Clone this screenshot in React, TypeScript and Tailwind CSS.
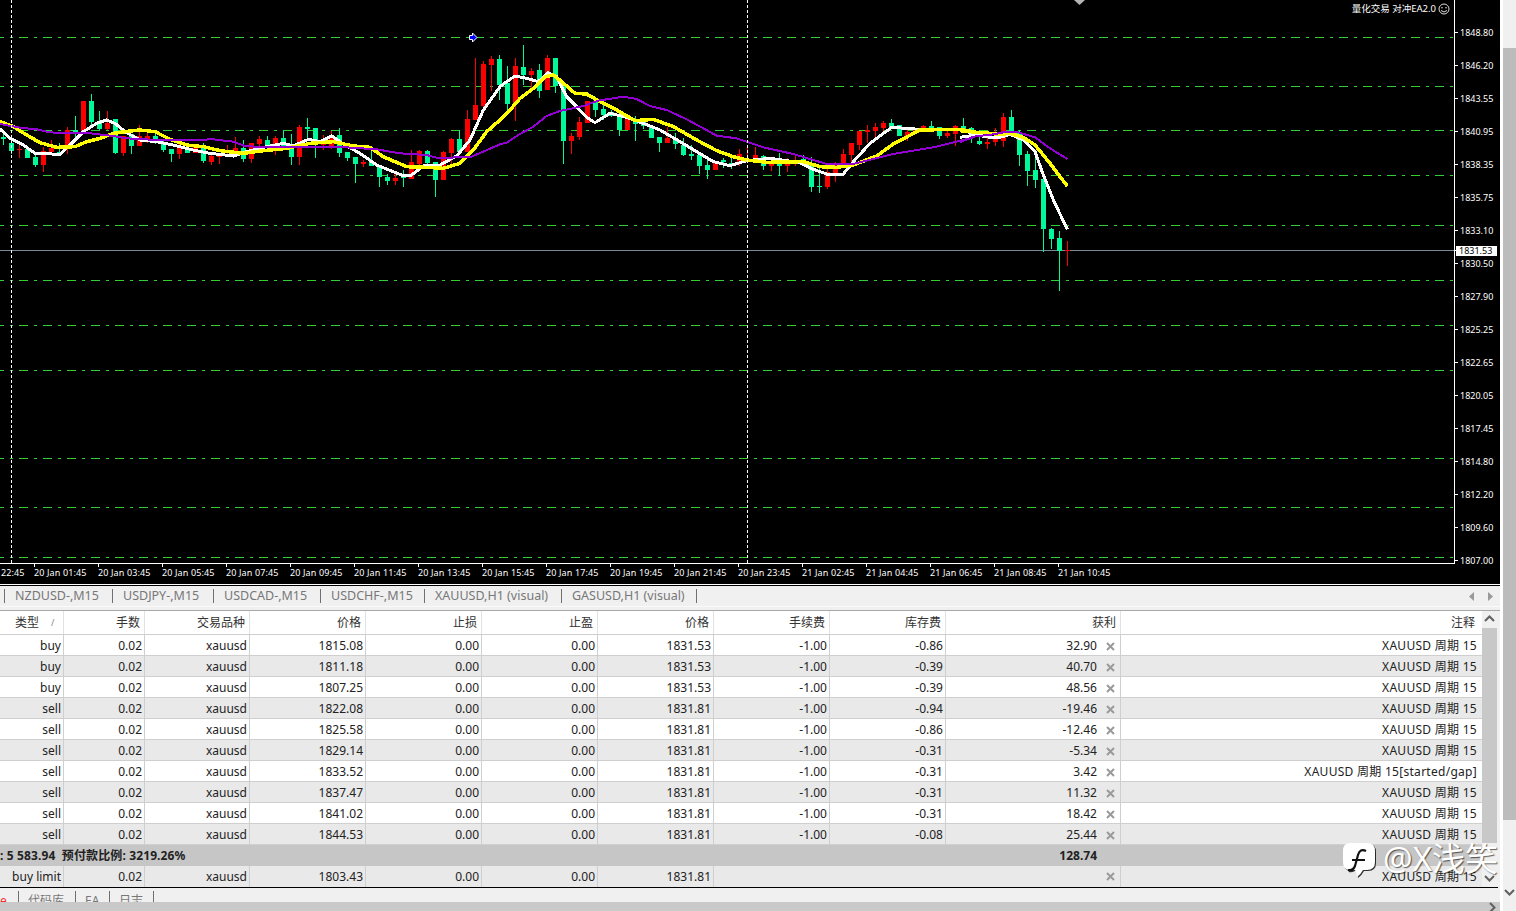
const prices = ["1848.80","1846.20","1843.55","1840.95","1838.35","1835.75","1833.10","1830.50","1827.90","1825.25","1822.65","1820.05","1817.45","1814.80","1812.20","1809.60","1807.00"];
const times = ["20 Jan 01:45","20 Jan 03:45","20 Jan 05:45","20 Jan 07:45","20 Jan 09:45","20 Jan 11:45","20 Jan 13:45","20 Jan 15:45","20 Jan 17:45","20 Jan 19:45","20 Jan 21:45","20 Jan 23:45","21 Jan 02:45","21 Jan 04:45","21 Jan 06:45","21 Jan 08:45","21 Jan 10:45"];
const gridLines = [37.5, 86.5, 130.5, 175.5, 225.5, 280.5, 325.5, 370.5, 458.5, 507.5, 557.5];
const tabs = [
  { label: "NZDUSD-,M15", w: "w-[108px]" },
  { label: "USDJPY-,M15", w: "w-[101px]" },
  { label: "USDCAD-,M15", w: "w-[107px]" },
  { label: "USDCHF-,M15", w: "w-[104px]" },
  { label: "XAUUSD,H1 (visual)", w: "w-[137px]" },
  { label: "GASUSD,H1 (visual)", w: "w-[135px]" },
];

// top, bottom, high, low in zoomed units (y = 30 + v / 3), one candle every 8px
type Candle = [string, number, number, number, number];
const candles: Candle[] = [
  ["g",321,327,310,345],["g",339,363,339,372],["r",357,361,345,384],["g",357,384,357,384],["g",381,405,375,411],
  ["r",363,405,351,426],["r",354,366,330,366],["g",366,372,339,372],["r",300,351,291,372],["g",300,310,258,330],
  ["r",213,312,213,312],["g",213,276,192,285],["g",280,297,243,300],["r",279,297,243,300],["g",267,369,267,372],
  ["r",318,369,318,378],["g",312,348,312,372],["r",318,348,285,348],["r",318,327,300,340],["g",318,339,305,342],
  ["g",339,360,330,366],["g",357,372,357,396],["r",351,372,340,387],["g",357,369,340,369],["r",351,369,345,369],
  ["g",345,393,339,399],["r",378,396,372,405],["r",375,381,372,402],["r",360,369,345,381],["r",354,366,321,378],
  ["g",354,387,330,396],["r",339,387,339,399],["r",327,342,318,348],["g",330,348,318,360],["r",324,345,318,375],
  ["g",324,348,300,360],["g",348,381,312,405],["r",291,381,285,405],["g",291,297,264,324],["g",294,330,294,384],
  ["r",327,345,315,360],["r",318,348,303,357],["g",315,369,294,381],["g",366,384,366,393],["g",381,402,381,459],
  ["r",396,402,390,411],["g",396,408,351,408],["g",405,441,405,471],["g",441,453,432,465],["r",444,453,432,465],
  ["g",441,444,420,471],["r",396,447,360,447],["r",363,402,360,408],["g",363,399,360,402],["g",396,450,396,501],
  ["r",366,450,363,450],["r",327,369,324,405],["g",327,366,300,366],["r",267,366,240,366],["r",225,270,84,270],
  ["r",102,228,93,246],["r",87,105,78,183],["g",87,165,75,210],["g",160,222,108,246],["r",108,222,84,273],
  ["g",111,135,45,165],["r",123,135,114,180],["g",120,183,102,204],["r",84,180,75,180],["g",84,168,84,189],
  ["g",165,333,165,402],["r",318,333,309,372],["r",276,321,261,330],["r",213,279,213,279],["g",216,240,216,261],
  ["g",237,255,222,270],["g",246,258,240,260],["g",255,300,240,318],["r",264,300,264,300],["g",270,282,258,333],
  ["g",276,288,270,297],["g",288,324,288,324],["g",321,339,321,366],["r",324,339,290,339],["g",324,342,310,357],
  ["g",345,375,324,378],["g",372,378,345,390],["g",375,408,366,432],["g",405,420,390,447],["r",399,420,396,420],
  ["g",390,396,384,414],["g",399,402,384,417],["r",372,396,357,408],["r",390,396,354,400],["r",375,390,351,396],
  ["g",378,408,375,420],["r",396,408,384,423],["g",384,408,369,438],["r",396,408,384,426],["r",390,396,375,408],
  ["g",387,402,375,405],["g",405,471,380,486],["g",468,471,405,489],["r",426,471,405,477],["r",405,429,396,456],
  ["r",372,405,357,411],["r",339,375,339,396],["r",303,345,303,360],["r",300,306,285,339],["r",291,303,279,321],
  ["r",279,294,273,310],["g",279,291,267,291],["g",285,318,285,318],["r",306,318,300,333],["r",300,306,296,312],
  ["r",288,297,285,303],["g",288,297,273,297],["g",291,318,291,327],["r",309,318,300,324],["r",288,312,285,348],
  ["g",288,300,264,303],["g",294,324,291,339],["g",333,342,300,345],["r",336,342,312,357],["r",327,336,294,348],
  ["r",261,333,249,351],["g",261,306,240,306],["g",306,375,300,408],["g",372,423,363,468],["g",420,450,380,474],
  ["g",447,597,447,666],["g",597,627,594,657],["g",624,663,603,783],["r",660,663,633,708],
];

type Pts = [number, number][];
const toLine = (a: Pts, b: Pts, c: Pts) =>
  [
    ...a.map(([x, y]) => `${x / 3},${30 + y / 3}`),
    ...b.map(([x, y]) => `${500 + x / 3},${30 + y / 3}`),
    ...c.map(([x, y]) => `${960 + x / 3},${100 + y / 3}`),
  ].join(" ");

const purple = toLine(
  [[0,282],[60,293],[110,298],[150,307],[200,310],[270,310],[340,318],[380,325],[470,330],[560,330],[640,328],[700,335],[735,348],[800,352],[900,350],[1040,352],[1130,358],[1200,370],[1280,375],[1310,383],[1410,382],[1500,343]],
  [[20,338],[60,312],[100,290],[140,258],[180,243],[250,228],[295,212],[370,200],[410,207],[450,228],[500,240],[560,268],[610,295],[650,317],[710,325],[790,352],[880,372],[980,402],[1060,402],[1180,372],[1300,352],[1370,335],[1420,322]],
  [[0,126],[40,110],[100,103],[130,97],[175,97],[225,112],[270,145],[322,177]]
);
const yellow = toLine(
  [[0,275],[40,290],[80,315],[120,338],[170,352],[225,350],[260,335],[300,325],[340,310],[390,303],[420,300],[465,305],[510,328],[560,345],[610,350],[660,362],[730,370],[790,362],[860,355],[930,340],[1000,335],[1060,348],[1110,352],[1150,380],[1220,410],[1280,412],[1330,415],[1380,400],[1420,360],[1460,305],[1500,270]],
  [[30,240],[60,205],[100,175],[135,140],[160,135],[185,155],[225,190],[260,192],[300,215],[350,240],[405,272],[460,268],[520,290],[590,330],[650,362],[700,380],[740,390],[800,397],[910,395],[960,410],[1010,412],[1060,405],[1130,378],[1180,342],[1260,300],[1380,298],[1430,307]],
  [[0,92],[50,97],[90,100],[120,103],[150,100],[190,112],[225,135],[270,190],[300,230],[322,258]]
);
const white = toLine(
  [[0,297],[30,325],[70,345],[105,370],[180,373],[215,340],[250,305],[290,280],[320,270],[345,280],[375,305],[420,330],[470,335],[520,345],[570,358],[630,370],[700,378],[740,365],[790,352],[850,340],[880,348],[925,328],[960,335],[995,318],[1035,345],[1080,370],[1130,405],[1180,425],[1210,437],[1235,435],[1270,408],[1320,405],[1370,378],[1410,330],[1450,240],[1500,170]],
  [[20,155],[45,138],[80,145],[115,155],[145,128],[170,140],[200,200],[225,225],[260,262],[285,278],[330,250],[380,262],[430,280],[480,300],[540,335],[590,365],[640,395],[690,407],[740,392],[810,385],[900,398],[940,418],[980,432],[1030,432],[1060,395],[1110,340],[1175,292],[1260,298],[1380,298],[1430,315]],
  [[0,112],[50,105],[90,112],[120,112],[150,103],[190,120],[225,155],[250,225],[280,300],[322,388]]
);

const rows = [
  ["buy","1815.08","1831.53","-0.86","32.90",""],
  ["buy","1811.18","1831.53","-0.39","40.70",""],
  ["buy","1807.25","1831.53","-0.39","48.56",""],
  ["sell","1822.08","1831.81","-0.94","-19.46",""],
  ["sell","1825.58","1831.81","-0.86","-12.46",""],
  ["sell","1829.14","1831.81","-0.31","-5.34",""],
  ["sell","1833.52","1831.81","-0.31","3.42","[started/gap]"],
  ["sell","1837.47","1831.81","-0.31","11.32",""],
  ["sell","1841.02","1831.81","-0.31","18.42",""],
  ["sell","1844.53","1831.81","-0.08","25.44",""],
];

const gridCols = "grid grid-cols-[64px_81px_105px_116px_116px_116px_116px_116px_116px_175px_361px]";
const cellCls = "flex items-center justify-end pr-[2px] border-r border-[#cfcfcf] whitespace-nowrap";
const noteCls = "flex items-center justify-end pr-[5px] whitespace-nowrap tracking-[0.28px]";

function CloseIcon() {
  return (
    <svg width="9" height="9" viewBox="0 0 9 9" className="shrink-0">
      <path d="M1 1L8 8M8 1L1 8" stroke="#9a9a9a" strokeWidth="2" />
    </svg>
  );
}

function Chevron({ dir }: { dir: "up" | "down" | "right" }) {
  const d = dir === "up" ? "M1 7L5.5 2.5L10 7" : dir === "down" ? "M1 3L5.5 7.5L10 3" : "M3 1L7.5 5.5L3 10";
  return (
    <svg width="11" height="11" viewBox="0 0 11 11" className="shrink-0">
      <path d={d} fill="none" stroke="#606060" strokeWidth="2" />
    </svg>
  );
}

function Row({ r, zebra }: { r: string[]; zebra: boolean }) {
  return (
    <div className={`${gridCols} h-[21px] border-b border-[#cfcfcf] [&>div]:pt-[2px] ${zebra ? "bg-[#e9e9e9]" : "bg-white"}`}>
      <div className={cellCls}>{r[0]}</div>
      <div className={cellCls}>0.02</div>
      <div className={cellCls}>xauusd</div>
      <div className={cellCls}>{r[1]}</div>
      <div className={cellCls}>0.00</div>
      <div className={cellCls}>0.00</div>
      <div className={cellCls}>{r[2]}</div>
      <div className={cellCls}>-1.00</div>
      <div className={cellCls}>{r[3]}</div>
      <div className={`${cellCls} gap-[9px] !pr-[5px]`}>
        <span>{r[4]}</span>
        <CloseIcon />
      </div>
      <div className={noteCls}>XAUUSD 周期 15{r[5]}</div>
    </div>
  );
}

function Chart() {
  return (
    <div className="relative h-[584px] shrink-0 bg-black overflow-hidden">
      <svg width="1500" height="584" className="absolute inset-0">
        {gridLines.map((y) => (
          <line key={y} x1="0" x2="1454" y1={y} y2={y} stroke="#32cd32" strokeWidth="1" strokeDasharray="9 6 3 6" strokeDashoffset="5" />
        ))}
        <line x1="0" x2="1454" y1="250.5" y2="250.5" stroke="#778899" />
        <g shapeRendering="crispEdges">
          {candles.map(([c, top, bottom, high, low], i) => {
            const fill = c === "g" ? "#00fa9a" : "#ff0000";
            const x = 1 + i * 8;
            return (
              <g key={i} fill={fill}>
                <rect x={x + 2} y={30 + high / 3} width="1" height={(low - high) / 3} />
                <rect x={x} y={30 + top / 3} width="5" height={Math.max(1, (bottom - top) / 3)} />
              </g>
            );
          })}
          <polyline points={white} fill="none" stroke="#ffffff" strokeWidth="3" />
          <polyline points={yellow} fill="none" stroke="#ffff00" strokeWidth="3.5" />
          <polyline points={purple} fill="none" stroke="#9400d3" strokeWidth="2" />
        </g>
        <line x1="11.5" x2="11.5" y1="0" y2="563" stroke="#fff" strokeDasharray="3 2" />
        <line x1="747.5" x2="747.5" y1="0" y2="563" stroke="#fff" strokeDasharray="3 2" />
        <path d="M469.5 35.5h3v-2.5l4.5 4.5l-4.500 4.500v-2.500h-3z" fill="#0000ff" stroke="#fff" />
        <path d="M1074 0h11l-5.500 5z" fill="#b5b5b5" />
        <line x1="1454.500" x2="1454.500" y1="0" y2="564" stroke="#fff" />
        <line x1="0" x2="1455" y1="563.500" y2="563.500" stroke="#fff" />
        {prices.map((_, i) => (
          <line key={i} x1="1454" x2="1458" y1={32.5 + i * 33} y2={32.5 + i * 33} stroke="#fff" />
        ))}
        <line x1="1454" x2="1458" y1="250.500" y2="250.500" stroke="#fff" />
        {times.map((_, i) => (
          <line key={i} x1={34.5 + i * 64} x2={34.5 + i * 64} y1="564" y2="567" stroke="#fff" />
        ))}
      </svg>

      {/* EA label */}
      <div className="absolute top-[2px] right-[50px] flex items-center gap-[2px] text-white text-[9.5px] leading-[13px]">
        <span>量化交易 对冲EA2.0</span>
        <svg width="12" height="12" viewBox="0 0 12 12">
          <circle cx="6" cy="6" r="5" fill="none" stroke="#ddd" />
          <circle cx="4" cy="4.800" r="0.800" fill="#ddd" />
          <circle cx="8" cy="4.800" r="0.800" fill="#ddd" />
          <path d="M3 7.500Q6 10.500 9 7.500" fill="none" stroke="#ddd" />
        </svg>
      </div>

      {/* bid price box */}
      <div className="absolute left-[1456px] top-[246px] w-[41px] h-[10px] bg-white text-black text-[9px] leading-[10px] pl-[3px]">1831.53</div>

      <div className="relative flex h-[564px]">
        <div className="w-[1454px]" />
        <div className="pt-[16px] pl-[6px] text-white text-[9px]">
          {prices.map((p) => (
            <div key={p} className="h-[33px] flex items-center">{p}</div>
          ))}
        </div>
      </div>
      <div className="relative flex h-[17px] items-center text-white text-[9px] tracking-[0.12px] whitespace-nowrap">
        <div className="w-[34px] pl-px">22:45</div>
        {times.map((t) => (
          <div key={t} className="w-[64px]">{t}</div>
        ))}
      </div>
    </div>
  );
}

export default function App() {
  return (
    <div className="relative w-[1516px] h-[911px] overflow-hidden flex bg-[#f0f0f0] text-[#222] text-[12px] font-['Noto_Sans','Noto_Sans_CJK_SC',sans-serif]">
      <div className="w-[1500px] shrink-0 flex flex-col">
        <Chart />
        <div className="h-px shrink-0 bg-white" />
        <div className="h-px shrink-0 bg-black" />

        {/* symbol tabs */}
        <div className="h-[21px] shrink-0 flex items-center pl-[4px] bg-[#f0f0f0] text-[#777] text-[12.5px] border-b border-[#fafafa]">
          {tabs.map((t) => (
            <div key={t.label} className={`${t.w} h-[14px] flex items-center pl-[10px] border-l border-[#707070] whitespace-nowrap`}>{t.label}</div>
          ))}
          <div className="h-[14px] border-l border-[#707070]" />
          <div className="ml-auto flex gap-[12px] pr-[7px]">
            <svg width="6" height="9" viewBox="0 0 6 9"><path d="M5 0v9L0 4.500z" fill="#999" /></svg>
            <svg width="6" height="9" viewBox="0 0 6 9"><path d="M1 0v9l5-4.500z" fill="#999" /></svg>
          </div>
        </div>
        <div className="h-[3px] shrink-0" />

        {/* orders table */}
        <div className="flex h-[277px] shrink-0 border-t border-[#a8a8a8]">
          <div className="w-[1482px] shrink-0">
            <div className={`${gridCols} h-[24px] bg-white text-[#333] border-b border-[#cfcfcf]`}>
              <div className="flex items-center pl-[15px] border-r border-[#e2e2e2]">
                <span>类型</span>
                <span className="ml-[12px] text-[9px] text-[#888]">/</span>
              </div>
              {["手数","交易品种","价格","止损","止盈","价格","手续费","库存费","获利"].map((h, i) => (
                <div key={i} className="flex items-center justify-end pr-[4px] border-r border-[#e2e2e2]">{h}</div>
              ))}
              <div className="flex items-center justify-end pr-[7px]">注释</div>
            </div>
            {rows.map((r, i) => (
              <Row key={i} r={r} zebra={i % 2 === 1} />
            ))}
            <div className={`${gridCols} h-[21px] bg-[#c6c6c6] font-bold text-[#222]`}>
              <div className="col-span-9 flex items-center whitespace-pre tracking-[0.12px]">: 5 583.94  预付款比例: 3219.26%</div>
              <div className="flex items-center justify-end pr-[24px]">128.74</div>
            </div>
            <div className={`${gridCols} h-[21px] bg-[#e9e9e9]`}>
              <div className={cellCls}>buy limit</div>
              <div className={cellCls}>0.02</div>
              <div className={cellCls}>xauusd</div>
              <div className={cellCls}>1803.43</div>
              <div className={cellCls}>0.00</div>
              <div className={cellCls}>0.00</div>
              <div className={cellCls}>1831.81</div>
              <div className="col-span-2" />
              <div className={`${cellCls} !pr-[5px]`}><CloseIcon /></div>
              <div className={noteCls}>XAUUSD 周期 15</div>
            </div>
          </div>
          <div className="w-[15px] flex flex-col items-center bg-[#f0f0f0]">
            <div className="h-[17px] flex items-center"><Chevron dir="up" /></div>
            <div className="w-full h-[215px] bg-[#c8c8c8]" />
            <div className="flex-1 flex items-end pb-[3px]"><Chevron dir="down" /></div>
          </div>
        </div>
        <div className="h-px shrink-0 bg-black w-[1498px]" />

        {/* bottom tabs, cut off by the window */}
        <div className="h-[14px] shrink-0 overflow-hidden flex items-start pt-[3px] text-[#777] bg-[#f0f0f0]">
          <span className="w-[18px] text-[#e33] leading-[20px]">e</span>
          <div className="h-[14px] border-l border-[#707070] pl-[9px] w-[57px] leading-[20px]">代码库</div>
          <div className="h-[14px] border-l border-[#707070] pl-[9px] w-[34px] leading-[20px]">EA</div>
          <div className="h-[14px] border-l border-[#707070] pl-[9px] w-[44px] leading-[20px]">日志</div>
          <div className="h-[14px] border-l border-[#707070]" />
        </div>
        <div className="h-[9px] shrink-0 overflow-hidden bg-[#c9c9c9] flex items-start justify-end pr-[2px]">
          <Chevron dir="right" />
        </div>
      </div>

      <div className="w-[3px] shrink-0 bg-white" />

      {/* window scrollbar */}
      <div className="flex-1 flex flex-col items-center bg-[#f0f0f0]">
        <div className="h-[48px]" />
        <div className="w-full h-[772px] bg-[#bcbcbc]" />
        <div className="flex-1 flex items-end pb-[13px]"><Chevron dir="down" /></div>
      </div>

      {/* watermark */}
      <div className="absolute left-[1342px] top-[840px] flex items-center gap-[7px] text-white text-[33px] leading-[36px] whitespace-nowrap [text-shadow:1px_1px_1px_rgba(0,0,0,0.6)]">
        <svg width="34" height="38" viewBox="0 0 34 38" className="drop-shadow-[1px_1px_0_rgba(0,0,0,0.8)]">
          <path d="M8 3h17q8 0 8 8v11q0 8-8 8h-4q-2 4-6 7q0-4-2-7h-5q-7 0-7-8V11q0-8 7-8z" fill="#fff" />
          <path d="M24 11q-6-3-8 4l-3 11q-2 5-7 4M10 20h13" fill="none" stroke="#111" strokeWidth="2.200" />
        </svg>
        <span>@X浅笑</span>
      </div>
    </div>
  );
}
